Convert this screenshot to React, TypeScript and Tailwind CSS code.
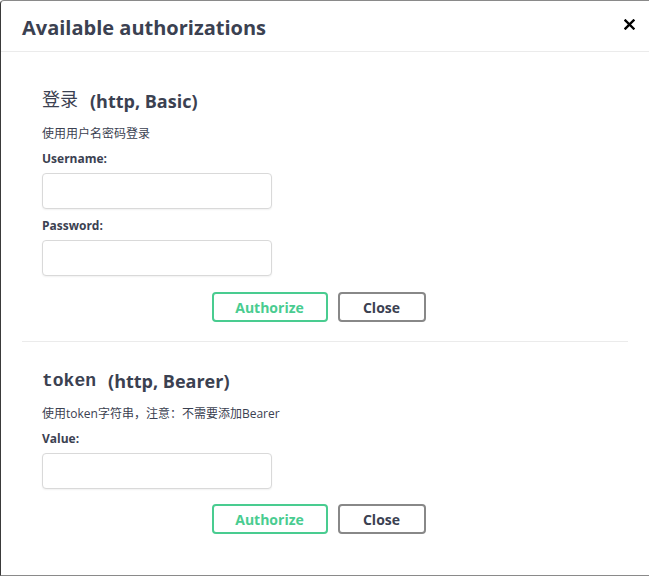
import React from "react";

const sans = "font-['Open_Sans','Noto_Sans_CJK_SC',sans-serif]";

type Field = { label: string; type?: string };

function AuthSection({
  name,
  scheme,
  description,
  fields,
  first,
}: {
  name: string;
  scheme: string;
  description: string;
  fields: Field[];
  first?: boolean;
}) {
  return (
    <div
      className={`px-5 ${first ? "pt-[37px] pb-[19px] border-b border-[#ebebeb]" : "pt-[27px]"}`}
    >
      <h4 className="h-6 leading-6 text-[18px] font-bold text-[#3b4151] flex items-center">
        <code
          className={`font-['Liberation_Mono','Noto_Sans_CJK_SC',monospace] ${first ? "font-normal" : "font-bold"}`}
        >
          {name}
        </code>
        <span className="ml-[12px]">({scheme})</span>
      </h4>
      <p className="mt-[13px] h-4 leading-4 text-[12px] text-[#3b4151]">{description}</p>
      {fields.map((f) => (
        <div key={f.label} className="mt-[9px]">
          <label className="block h-4 leading-4 text-[12px] font-bold text-[#3b4151]">
            {f.label}:
          </label>
          <input
            type={f.type ?? "text"}
            className="mt-[6px] block w-[230px] h-9 rounded-[4px] border border-[#d9d9d9] bg-white px-2 text-sm shadow-[0_1px_2px_rgba(0,0,0,0.06)] outline-none"
          />
        </div>
      ))}
      <div className={`${first ? "mt-4" : "mt-[15px]"} flex justify-center gap-[10px] pr-[13px]`}>
        <button className="h-[30px] w-[116px] rounded-[4px] border-2 border-[#49cc90] bg-white text-[14px] font-bold text-[#49cc90]">
          Authorize
        </button>
        <button className="h-[30px] w-[88px] rounded-[4px] border-2 border-[#888888] bg-white text-[14px] font-bold text-[#3b4151]">
          Close
        </button>
      </div>
    </div>
  );
}

export default function App() {
  return (
    <div
      className={`${sans} w-[649px] h-[576px] bg-white border-l border-t border-b border-l-[#3a3a3a] border-t-[#8a8a8a] border-b-[#8a8a8a] rounded-tl-[4px] overflow-hidden flex flex-col`}
    >
      {/* Header */}
      <div className="h-[51px] shrink-0 flex items-center justify-between pl-[21px] pr-[10px] border-b border-[#ebebeb]">
        <h3 className="text-[20px] font-bold text-[#3b4151] leading-6 mt-[3px]">
          Available authorizations
        </h3>
        <button className="w-5 h-5 flex items-center justify-center mb-[4px]">
          <svg width="11" height="11" viewBox="0 0 11 11">
            <path d="M1.5 1.5 L9.5 9.5 M9.5 1.5 L1.5 9.5" stroke="#000" strokeWidth="2.4" strokeLinecap="square" />
          </svg>
        </button>
      </div>

      {/* Content */}
      <div className="px-[21px] flex-1">
        <AuthSection
          first
          name="登录"
          scheme="http, Basic"
          description="使用用户名密码登录"
          fields={[{ label: "Username" }, { label: "Password", type: "password" }]}
        />
        <AuthSection
          name="token"
          scheme="http, Bearer"
          description="使用token字符串，注意：不需要添加Bearer"
          fields={[{ label: "Value" }]}
        />
      </div>
    </div>
  );
}
